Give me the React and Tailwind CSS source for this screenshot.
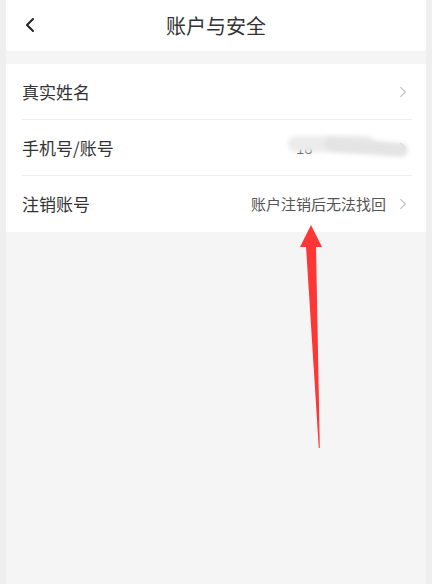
import { ChevronLeft, ChevronRight } from "lucide-react";

const rows = [
  { label: "真实姓名", value: null },
  { label: "手机号/账号", value: "phone" },
  { label: "注销账号", value: "账户注销后无法找回" },
];

const BlurredPhone = () => (
  <div className="relative w-[96px] h-[20px]">
    <span className="absolute left-[6px] top-[-1px] text-[15px] text-[#444]">18</span>
    <div className="absolute left-[-2px] top-[-2px] w-[86px] h-[16px] rounded-full bg-[#ececec] blur-[2px]" />
    <div className="absolute left-[34px] top-[2px] w-[84px] h-[14px] rounded-full bg-[#e4e4e4] blur-[2px] rotate-[5deg]" />
  </div>
);

export default function App() {
  return (
    <div
      className="relative h-[584px] w-[432px] bg-[#efefef] px-[6px]"
      style={{ fontFamily: '"Noto Sans CJK SC", "Noto Sans", sans-serif' }}
    >
      <div className="h-full bg-[#f5f5f5]">
        {/* Header */}
        <div className="relative flex h-[51px] items-center justify-center bg-white">
          <ChevronLeft
            className="absolute left-[12px] top-[13px] text-[#222]"
            size={24}
            strokeWidth={2}
          />
          <h1 className="text-[20px] text-[#333]">账户与安全</h1>
        </div>

        {/* List */}
        <div className="mt-[13px] bg-white pl-[16px] pr-[14px]">
          {rows.map((row, i) => (
            <div
              key={row.label}
              className={`flex h-[56px] items-center justify-between ${
                i < rows.length - 1 ? "border-b border-[#eeeeee]" : ""
              }`}
            >
              <span className="text-[17px] text-[#333]">{row.label}</span>
              <div className="flex items-center gap-[8px]">
                {row.value === "phone" ? (
                  <BlurredPhone />
                ) : row.value ? (
                  <span className="text-[15px] text-[#555]">{row.value}</span>
                ) : null}
                <ChevronRight className="text-[#c4c4c4]" size={18} strokeWidth={1.5} />
              </div>
            </div>
          ))}
        </div>
      </div>

      {/* Red annotation arrow */}
      <svg className="absolute left-0 top-0" width="432" height="584">
        <polygon points="311,225 300,247 322,247" fill="#ff3636" />
        <polygon points="306,246 316,246 319.8,448 318.8,448" fill="#ff3636" />
      </svg>
    </div>
  );
}
